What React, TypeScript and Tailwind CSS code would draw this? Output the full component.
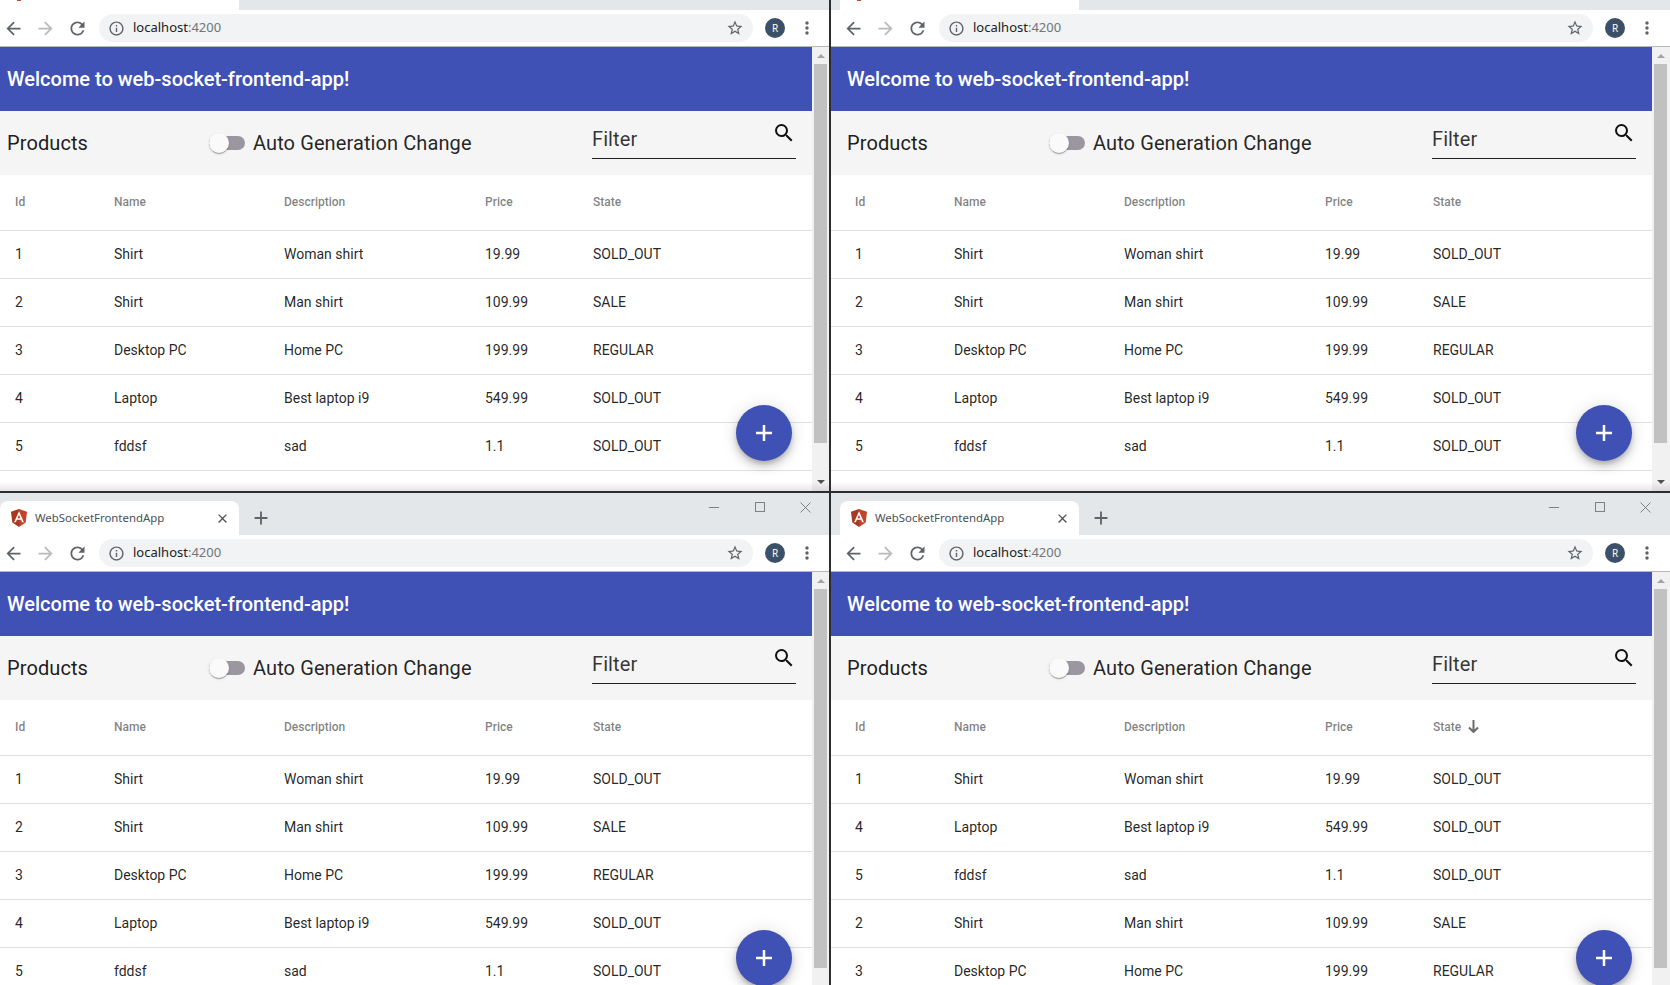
import React from 'react';
import {
  MdAdd,
  MdArrowBack,
  MdArrowForward,
  MdClose,
  MdInfoOutline,
  MdMoreVert,
  MdRefresh,
  MdSearch,
  MdStarBorder,
} from 'react-icons/md';

type Product = { id: number; name: string; description: string; price: string; state: string };

const products: Product[] = [
  { id: 1, name: 'Shirt', description: 'Woman shirt', price: '19.99', state: 'SOLD_OUT' },
  { id: 2, name: 'Shirt', description: 'Man shirt', price: '109.99', state: 'SALE' },
  { id: 3, name: 'Desktop PC', description: 'Home PC', price: '199.99', state: 'REGULAR' },
  { id: 4, name: 'Laptop', description: 'Best laptop i9', price: '549.99', state: 'SOLD_OUT' },
  { id: 5, name: 'fddsf', description: 'sad', price: '1.1', state: 'SOLD_OUT' },
];

const byId = (ids: number[]) => ids.map((id) => products.find((p) => p.id === id) as Product);

const columns = 'grid grid-cols-[114px_170px_201px_108px_1fr] items-center border-b border-[#e0e0e0]';

const AngularLogo = () => (
  <svg width="16" height="18" viewBox="0 0 16 18" className="shrink-0">
    <polygon points="8,0 0,2.8 1.3,13.6 8,18" fill="#a6391f" />
    <polygon points="8,0 16,2.8 14.7,13.6 8,18" fill="#c0432a" />
    <path d="M8 2.2 3.1 13.2h1.8l1-2.5h4.2l1 2.5h1.8L8 2.2zm-1.4 7 1.4-3.4 1.4 3.4H6.6z" fill="#fff" />
  </svg>
);

const TabStrip = ({ visible, pad }: { visible: boolean; pad: boolean }) => {
  if (!visible) {
    return (
      <div className={`flex h-[10px] shrink-0 bg-[#e4e7ea] ${pad ? 'pl-[9px]' : ''}`}>
        <div className="relative h-full w-[239px] bg-white">
          <div className="absolute left-[17px] top-[-1px] h-[2px] w-[4px] bg-[#b5502a]" />
        </div>
        <div className="flex-1 rounded-bl-lg bg-[#e4e7ea]" />
      </div>
    );
  }
  return (
    <div className={`flex h-[42px] shrink-0 items-end bg-[#e4e7ea] ${pad ? 'pl-[9px]' : ''}`}>
      <div className="flex h-[34px] w-[239px] items-center rounded-t-lg bg-white pl-[11px] pr-[9px]">
        <AngularLogo />
        <span className="ml-[8px] flex-1 font-['Noto_Sans',sans-serif] text-[11.4px] text-[#4a4f55]">WebSocketFrontendApp</span>
        <MdClose size={15} className="text-[#4d4f52]" />
      </div>
      <MdAdd size={22} className="ml-[11px] mb-[6px] text-[#5f6368]" />
      <div className={`flex h-full flex-1 items-start justify-end pt-[9px] ${pad ? 'pr-[19px]' : 'pr-[18px]'}`}>
        <div className="mt-[5px] h-px w-[10px] bg-[#7d8083]" />
        <div className="ml-[36px] h-[10px] w-[10px] border border-[#7d8083]" />
        <svg width="11" height="11" viewBox="0 0 11 11" className="ml-[35px] text-[#7d8083]">
          <path d="M.5.5l10 10M10.5.5l-10 10" stroke="currentColor" strokeWidth="1" fill="none" />
        </svg>
      </div>
    </div>
  );
};

const Toolbar = ({ pad }: { pad: boolean }) => (
  <div className={`flex h-[37px] shrink-0 items-center border-b border-[#b8b8b8] bg-white ${pad ? 'pl-[9px]' : ''}`}>
    <MdArrowBack size={21} className="ml-[3px] text-[#5f6368]" />
    <MdArrowForward size={21} className="ml-[11px] text-[#bababa]" />
    <MdRefresh size={21} className="ml-[11px] text-[#5f6368]" />
    <div className="ml-[11px] flex h-[28px] w-[654px] items-center rounded-full bg-[#f1f3f4] pl-[9px] pr-[9px]">
      <MdInfoOutline size={17} className="text-[#5f6368]" />
      <span className="ml-2 flex-1 font-['Noto_Sans',sans-serif] text-[13px] text-[#202124]">
        localhost<span className="text-[#70757a]">:4200</span>
      </span>
      <MdStarBorder size={18} className="text-[#5f6368]" />
    </div>
    <div className="ml-[12px] flex h-5 w-5 items-center justify-center rounded-full bg-[#3c5068] font-['Noto_Sans',sans-serif] text-[10px] text-white">
      R
    </div>
    <MdMoreVert size={20} className="ml-[12px] text-[#5f6368]" />
  </div>
);

const Scrollbar = ({ wide }: { wide: boolean }) => (
  <div className={`flex shrink-0 flex-col bg-[#f1f1f1] ${wide ? 'w-[18px] pr-[1px]' : 'w-[17px]'} h-[444px]`}>
    <div className="flex h-[17px] shrink-0 items-center justify-center">
      <div className="h-0 w-0 border-x-[4px] border-b-[4px] border-x-transparent border-b-[#a3a3a3]" />
    </div>
    <div className="mx-[2px] h-[379px] shrink-0 bg-[#c1c1c1]" />
    <div className="flex flex-1 items-end justify-center pb-[7px]">
      <div className="h-0 w-0 border-x-[4px] border-t-[4px] border-x-transparent border-t-[#505050]" />
    </div>
  </div>
);

const Panel = ({ rows, pad, fullTabs, sorted }: { rows: Product[]; pad: boolean; fullTabs: boolean; sorted?: boolean }) => {
  return (
    <div className={`relative flex h-full min-w-0 flex-col overflow-hidden bg-white font-['Roboto',sans-serif] ${pad ? 'flex-1' : 'w-[829px] shrink-0'}`}>
      <TabStrip visible={fullTabs} pad={pad} />
      <Toolbar pad={pad} />
      <div className="flex min-h-0 flex-1">
        <div className="relative min-w-0 flex-1">
          <div className={`flex h-16 items-center bg-[#3f51b5] text-[20px] font-medium text-white ${pad ? 'pl-4' : 'pl-[7px]'}`}>
            Welcome to web-socket-frontend-app!
          </div>

          <div className={`flex h-16 bg-[#f5f5f5] text-[20px] tracking-[0.1px] text-black/87 ${pad ? 'pl-4' : 'pl-[7px]'}`}>
            <div className="flex w-[202px] items-center text-black/90">Products</div>
            <div className="flex items-center">
              <div className="relative h-3.5 w-9 rounded-full bg-[#9b97a1]">
                <div className="absolute left-0 top-[-3px] h-5 w-5 rounded-full bg-[#fafafa] shadow-[0_2px_1px_-1px_rgba(0,0,0,.2),0_1px_1px_rgba(0,0,0,.14),0_1px_3px_rgba(0,0,0,.12)]" />
              </div>
              <span className="ml-2">Auto Generation Change</span>
            </div>
            <div className="ml-auto mr-4 mt-2 flex h-[40px] w-[204px] items-start justify-between border-b border-[#212121]">
              <span className="leading-[40px] text-black/80">Filter</span>
              <MdSearch size={24} className="mt-[2px] text-[#111]" />
            </div>
          </div>

          <div className={`${columns} h-14 pb-[2px] text-[12px] font-medium text-black/50 ${pad ? 'pl-[9px]' : ''}`}>
            <span className="pl-[15px]">Id</span>
            <span>Name</span>
            <span>Description</span>
            <span>Price</span>
            <span className="flex items-center">
              State
              {sorted && (
                <svg width="11" height="13" viewBox="0 0 11 13" className="ml-[7px] text-[#6b6b6b]">
                  <path d="M5.5 0v12M1 7.5l4.5 4.5L10 7.5" stroke="currentColor" strokeWidth="2" fill="none" />
                </svg>
              )}
            </span>
          </div>
          {rows.map((p) => (
            <div key={p.id} className={`${columns} h-12 text-[14px] text-black/87 ${pad ? 'pl-[9px]' : ''}`}>
              <span className="pl-[15px]">{p.id}</span>
              <span>{p.name}</span>
              <span>{p.description}</span>
              <span>{p.price}</span>
              <span>{p.state}</span>
            </div>
          ))}

          <button className="absolute right-5 top-[358px] flex h-14 w-14 items-center justify-center rounded-full bg-[#3f51b5] text-white shadow-[0_3px_5px_-1px_rgba(0,0,0,.2),0_6px_10px_rgba(0,0,0,.14),0_1px_18px_rgba(0,0,0,.12)]">
            <svg width="16" height="16" viewBox="0 0 16 16">
              <path d="M8 0v16M0 8h16" stroke="currentColor" strokeWidth="2.5" fill="none" />
            </svg>
          </button>
        </div>
        <Scrollbar wide={pad} />
      </div>
      {!fullTabs && (
        <div className="pointer-events-none absolute inset-x-0 bottom-0 h-[9px] bg-gradient-to-b from-transparent to-black/10" />
      )}
    </div>
  );
};

export default function App() {
  return (
    <div className="flex h-[985px] w-[1670px] flex-col overflow-hidden bg-[#2d2d2d]">
      <div className="flex h-[491px] shrink-0">
        <Panel rows={products} pad={false} fullTabs={false} />
        <div className="w-[2px] shrink-0" />
        <Panel rows={products} pad fullTabs={false} />
      </div>
      <div className="h-[2px] shrink-0" />
      <div className="flex min-h-0 flex-1">
        <Panel rows={products} pad={false} fullTabs />
        <div className="w-[2px] shrink-0" />
        <Panel rows={byId([1, 4, 5, 2, 3])} pad fullTabs sorted />
      </div>
    </div>
  );
}
